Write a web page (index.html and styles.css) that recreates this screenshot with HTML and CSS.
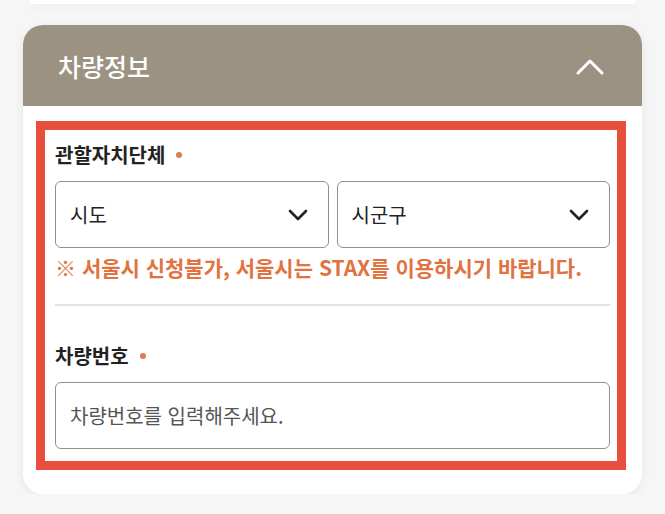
FILE: index.html
```html
<!DOCTYPE html>
<html lang="ko">
<head>
	<meta charset="utf-8">
	<meta name="viewport" content="width=device-width">
	<title>차량정보</title>
	<link rel="stylesheet" href="styles.css">
</head>
<body>
	<div class="prev-card"></div>
	<div class="card">
		<div class="card-head">
			<h2 class="title">차량정보</h2>
			<svg class="toggle" width="28" height="16" viewBox="0 0 28 16">
				<path d="M2 14 L14 2 L26 14" fill="none" stroke="#fff" stroke-width="3" stroke-linecap="round" stroke-linejoin="round" />
			</svg>
		</div>
		<div class="card-body">
			<div class="highlight">
				<div class="field">
					<div class="label">관할자치단체 <span class="req"></span></div>
					<div class="selects">
						<div class="select">
							<span>시도</span>
							<svg width="20" height="12" viewBox="0 0 20 12"><path d="M2 2 L10 10 L18 2" fill="none" stroke="#222" stroke-width="2.6" stroke-linecap="round" stroke-linejoin="round" /></svg>
						</div>
						<div class="select">
							<span>시군구</span>
							<svg width="20" height="12" viewBox="0 0 20 12"><path d="M2 2 L10 10 L18 2" fill="none" stroke="#222" stroke-width="2.6" stroke-linecap="round" stroke-linejoin="round" /></svg>
						</div>
					</div>
					<p class="notice">※ 서울시 신청불가, 서울시는 STAX를 이용하시기 바랍니다.</p>
				</div>
				<div class="divider"></div>
				<div class="field">
					<div class="label">차량번호 <span class="req"></span></div>
					<div class="input">차량번호를 입력해주세요.</div>
				</div>
			</div>
		</div>
	</div>
</body>
</html>
```

FILE: styles.css
```css
* {
	box-sizing: border-box;
	font-family: "Noto Sans CJK KR", "Noto Sans", sans-serif;
}

body {
	background: #f6f6f6;
	margin: 0;
	padding: 0 23px;
}

.prev-card {
	background: #fff;
	border-radius: 0 0 20px 20px;
	box-shadow: 0 2px 8px rgba(0, 0, 0, 0.06);
	height: 4px;
	margin: 0 6px;
}

.card {
	background: #fff;
	border-radius: 20px;
	box-shadow: 0 2px 10px rgba(0, 0, 0, 0.07);
	margin-top: 21px;
	overflow: hidden;
}

.card-head {
	align-items: center;
	background: #9b9282;
	display: flex;
	height: 81px;
	justify-content: space-between;
	padding: 0 38px 0 35px;
}
.title {
	color: #fff;
	font-size: 25px;
	font-weight: 500;
	margin: 0;
}
.toggle {
	margin-top: 2px;
}

.card-body {
	padding: 15px 16px 24px 13px;
}

.highlight {
	border: 9px solid #e84e3c;
	padding: 12px 7px 12px 10px;
}

.label {
	align-items: center;
	color: #222;
	display: flex;
	font-size: 20px;
	font-weight: 700;
	gap: 11px;
	line-height: 26px;
}
.req {
	background: #e07a55;
	border-radius: 50%;
	height: 6px;
	width: 6px;
}

.selects {
	display: flex;
	gap: 8px;
	margin-top: 13px;
}
.select {
	align-items: center;
	border: 1.5px solid #8e8e8e;
	border-radius: 6px;
	color: #222;
	display: flex;
	flex: 1;
	font-size: 20px;
	height: 67px;
	justify-content: space-between;
	padding: 0 20px 0 14px;
}

.notice {
	color: #e0733f;
	font-size: 21px;
	font-weight: 700;
	line-height: 28px;
	margin: 5px 0 0;
	white-space: nowrap;
}

.divider {
	background: #e3e3e3;
	height: 2px;
	margin: 23px 0 37px;
}

.input {
	align-items: center;
	border: 1.5px solid #8e8e8e;
	border-radius: 6px;
	color: #555;
	display: flex;
	font-size: 20px;
	height: 67px;
	margin-top: 13px;
	padding: 0 14px;
}
```
